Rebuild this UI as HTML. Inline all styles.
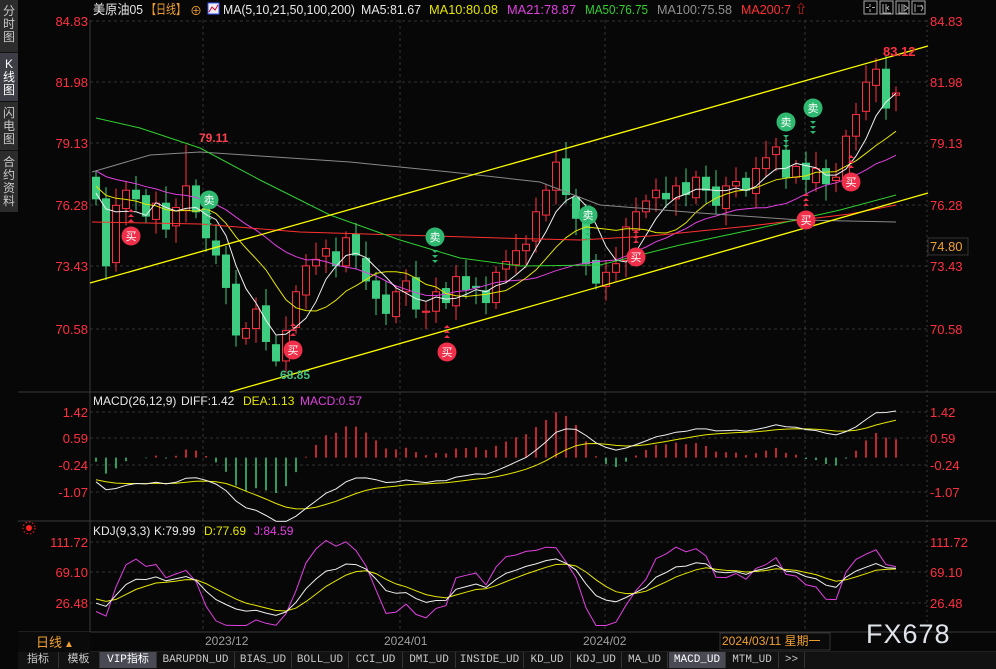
<!DOCTYPE html>
<html><head><meta charset="utf-8">
<style>
html,body{margin:0;padding:0;background:#070707;width:996px;height:669px;overflow:hidden;font-family:"Liberation Sans","Noto Sans CJK SC",sans-serif;}
#root{position:relative;width:996px;height:669px;}
svg{position:absolute;left:0;top:0;}
.side{position:absolute;left:0;top:0;width:18px;height:212px;background:#2c2c2c;color:#c8c8c8;font-size:12px;line-height:13px;text-align:center;}
.side div{padding:5px 0 3px;border-bottom:1px solid #111;}
.side .on{background:#3d3d45;color:#fff;}
.tabs{position:absolute;left:18px;top:652px;height:17px;width:978px;background:#121212;font-size:11px;color:#c8c8c8;}
.tabs span{position:absolute;top:0;height:16px;line-height:16px;text-align:center;border-right:1px solid #333;font-family:"Liberation Mono","Noto Sans CJK SC",monospace;}
.tabs .on{background:#4a4a55;color:#fff;}
</style></head><body><div id="root">
<div class="side"><div style="height:44px">分<br>时<br>图</div><div class="on" style="height:40px">K<br>线<br>图</div><div style="height:40px">闪<br>电<br>图</div><div style="height:52px;border:0">合<br>约<br>资<br>料</div></div>
<svg id="s" width="996" height="669" xmlns="http://www.w3.org/2000/svg" font-family="Liberation Sans, Noto Sans CJK SC, sans-serif">
<g font-size="13">
<text x="93" y="14" fill="#e8e8e8" textLength="50" lengthAdjust="spacingAndGlyphs">美原油05</text>
<text x="146" y="14" fill="#f0a030" textLength="40" lengthAdjust="spacingAndGlyphs">【日线】</text>
<text x="190" y="15" fill="#f0a030" font-size="12">⊕</text>
<rect x="208" y="3" width="11" height="11" fill="#eee" stroke="#3355ff"/><polyline points="209,12 212,7 215,10 218,5" fill="none" stroke="#c03" stroke-width="1"/>
<text x="223" y="14" fill="#e8e8e8" textLength="132" lengthAdjust="spacingAndGlyphs">MA(5,10,21,50,100,200)</text>
<text x="361" y="14" fill="#e8e8e8" textLength="60" lengthAdjust="spacingAndGlyphs">MA5:81.67</text>
<text x="429" y="14" fill="#e6e600" textLength="69" lengthAdjust="spacingAndGlyphs">MA10:80.08</text>
<text x="507" y="14" fill="#e040e0" textLength="69" lengthAdjust="spacingAndGlyphs">MA21:78.87</text>
<text x="585" y="14" fill="#30d030" textLength="63" lengthAdjust="spacingAndGlyphs">MA50:76.75</text>
<text x="657" y="14" fill="#909090" textLength="75" lengthAdjust="spacingAndGlyphs">MA100:75.58</text>
<text x="741" y="14" fill="#ff3030" textLength="50" lengthAdjust="spacingAndGlyphs">MA200:7</text>
<text x="795" y="13" fill="#ff2020" font-size="12" font-weight="bold">⇧</text>
</g>
<g fill="none" stroke="#aaa" stroke-width="1">
<rect x="864" y="1" width="13" height="13"/><rect x="880" y="1" width="13" height="13"/><rect x="896" y="1" width="13" height="13"/><rect x="912" y="1" width="13" height="13"/>
<path d="M870 4v3M870 9v3M866 7.5h3M872 7.5h3M883 4v9h8M886 4v8M889 6l-2 2 2 2M899 4v9h8M902 4v8M904 5l4 3-4 3zM915 4v8M917 6h6M921 5l2 3-2 3"/>
</g>
<g id="grid" stroke="#333" stroke-dasharray="3,3" stroke-width="1"></g>
<line x1="90" y1="20" x2="90" y2="632" stroke="#3a3a3a"/>
<line x1="927" y1="20" x2="927" y2="632" stroke="#3a3a3a" stroke-dasharray="2,3"/>
<line x1="18" y1="392" x2="996" y2="392" stroke="#3a3a3a"/>
<line x1="18" y1="521" x2="996" y2="521" stroke="#3a3a3a"/>
<line x1="18" y1="632" x2="996" y2="632" stroke="#3a3a3a"/>
<line x1="18" y1="652" x2="996" y2="652" stroke="#3a3a3a"/>
<g id="axis" font-size="13" fill="#ff3040"></g>
<g id="chart"></g>
<line x1="90" y1="283" x2="928" y2="46" stroke="#ffff00" stroke-width="1.3"/>
<line x1="230" y1="392" x2="928" y2="193" stroke="#ffff00" stroke-width="1.3"/>
<g id="sig" font-size="11" text-anchor="middle"></g>
<text x="199" y="142" fill="#ff4050" font-size="12" font-weight="bold">79.11</text>
<text x="280" y="379" fill="#40c080" font-size="12" font-weight="bold">68.85</text>
<text x="883" y="56" fill="#ff3040" font-size="13" font-weight="bold">83.12</text>
<rect x="928" y="238" width="40" height="17" fill="#0a0a0a" stroke="#333"/>
<text x="930" y="251" fill="#f0a030" font-size="13">74.80</text>
<g font-size="12">
<text x="93" y="405" fill="#e8e8e8">MACD(26,12,9)</text>
<text x="181" y="405" fill="#e8e8e8">DIFF:1.42</text>
<text x="243" y="405" fill="#e6e600">DEA:1.13</text>
<text x="300" y="405" fill="#e040e0">MACD:0.57</text>
<text x="93" y="535" fill="#e8e8e8">KDJ(9,3,3)</text>
<text x="154" y="535" fill="#e8e8e8">K:79.99</text>
<text x="204" y="535" fill="#e6e600">D:77.69</text>
<text x="254" y="535" fill="#e040e0">J:84.59</text>
</g>
<circle cx="29" cy="528" r="3" fill="#ff2020"/><circle cx="29" cy="528" r="6" fill="none" stroke="#ff2020" stroke-dasharray="1.5,2"/>
<rect x="18" y="632" width="72" height="20" fill="#0a0a0a"/>
<text x="36" y="647" fill="#f0a030" font-size="13">日线</text><text x="64" y="647" fill="#f0a030" font-size="10">▲</text>
<g font-size="12" fill="#a0a0a0"><text x="205" y="645">2023/12</text><text x="384" y="645">2024/01</text><text x="583" y="645">2024/02</text></g>
<rect x="720" y="633" width="110" height="17" fill="#0a0a0a" stroke="#333"/>
<text x="722" y="645" fill="#f0a030" font-size="12">2024/03/11 星期一</text>
<text x="866" y="643" fill="#e0e4ea" font-size="27" letter-spacing="1">FX678</text>
</svg>
<div class="tabs">
<span style="left:0;width:40px">指标</span><span style="left:40px;width:41px">模板</span><span class="on" style="left:82px;width:56px">VIP指标</span><span style="left:139px;width:77px">BARUPDN_UD</span><span style="left:217px;width:56px">BIAS_UD</span><span style="left:274px;width:56px">BOLL_UD</span><span style="left:331px;width:53px">CCI_UD</span><span style="left:385px;width:52px">DMI_UD</span><span style="left:438px;width:67px">INSIDE_UD</span><span style="left:506px;width:46px">KD_UD</span><span style="left:553px;width:50px">KDJ_UD</span><span style="left:604px;width:45px">MA_UD</span><span class="on" style="left:651px;width:56px">MACD_UD</span><span style="left:708px;width:52px">MTM_UD</span><span style="left:761px;width:25px">&gt;&gt;</span>
</div>
</div>
<script>
var NS="http://www.w3.org/2000/svg";
function el(p,t,a){var e=document.createElementNS(NS,t);for(var k in a)e.setAttribute(k,a[k]);p.appendChild(e);return e;}
var grid=document.getElementById('grid'),axis=document.getElementById('axis'),ch=document.getElementById('chart'),sig=document.getElementById('sig');
function py(p){return 21+(84.83-p)*21.61;}
var pl=[["84.83",21],["81.98",82],["79.13",143],["76.28",205],["73.43",266],["70.58",329]];
pl.forEach(function(a){el(grid,'line',{x1:90,y1:a[1],x2:927,y2:a[1]});var t=el(axis,'text',{x:88,y:a[1]+5,'text-anchor':'end'});t.textContent=a[0];var t2=el(axis,'text',{x:930,y:a[1]+5});t2.textContent=a[0];});
[["1.42",412],["0.59",438],["-0.24",465],["-1.07",492],["111.72",542],["69.10",572],["26.48",603]].forEach(function(a){el(grid,'line',{x1:90,y1:a[1],x2:927,y2:a[1]});var t=el(axis,'text',{x:88,y:a[1]+5,'text-anchor':'end'});t.textContent=a[0];var t2=el(axis,'text',{x:930,y:a[1]+5});t2.textContent=a[0];});
[203,400,605,805].forEach(function(x){el(grid,'line',{x1:x,y1:20,x2:x,y2:632});});
var c=[76.6,73.5,76.3,77,76.6,75.8,76.4,75.2,76.2,77.2,76.0,74.8,74.0,72.5,70.3,70.6,71.5,70.0,69.1,70.5,72.3,73.5,73.8,74.3,73.5,74.8,74.0,72.8,72.0,71.3,72.3,72.8,71.5,71.4,72.3,71.8,73.0,72.4,72.5,71.8,73.2,73.7,74.2,74.5,76.0,77.0,78.3,76.8,75.7,73.6,72.7,73.2,73.6,75.3,76.0,76.5,77.0,76.6,77.2,76.8,77.6,77.0,76.3,77.2,77.4,77.0,78.0,78.5,79.0,77.6,78.1,77.5,78.0,77.3,77.6,79.5,80.5,82.0,82.6,80.8,81.5];
var pre=[];for(var i=0;i<30;i++)pre.push(80.5-i*0.13);
var all=pre.concat(c);var N=c.length;
function X(i){return 96+i*10;}
var H=[],L=[];
for(var i=0;i<N;i++){var o=i?c[i-1]+((i%3)-1)*0.15:77.6;var cl=c[i];var hi=Math.max(o,cl)+0.3+((i*7)%5)*0.12,lo=Math.min(o,cl)-0.3-((i*3)%5)*0.12;
if(i==9)hi=79.11;if(i==18)lo=68.85;if(i==78)hi=83.12;if(i==80){o=81.4;}
H.push(hi);L.push(lo);
var up=cl>=o,col=up?'#ff3040':'#3dcc80';
el(ch,'line',{x1:X(i),y1:py(hi),x2:X(i),y2:py(lo),stroke:col});
var t=py(Math.max(o,cl)),b=py(Math.min(o,cl));if(b-t<1)b=t+1;
el(ch,'rect',{x:X(i)-3.5,y:t,width:7,height:b-t,fill:up?'#070707':col,stroke:col});}
function ma(n){var r=[];for(var i=0;i<N;i++){var s=0;for(var k=0;k<n;k++)s+=all[30+i-k];r.push(s/n);}return r;}
function line(v,f,col){var p=[];for(var i=0;i<N;i++)p.push(X(i)+','+f(v[i]).toFixed(1));el(ch,'polyline',{points:p.join(' '),fill:'none',stroke:col,'stroke-width':1});}
line(ma(21),py,'#e040e0');line(ma(10),py,'#e6e600');line(ma(5),py,'#f0f0f0');
el(ch,'polyline',{points:'92,172 150,155 200,152 260,156 350,162 450,172 540,182 600,205 700,213 800,220 896,222',fill:'none',stroke:'#888'});
el(ch,'polyline',{points:'92,222 200,224 300,232 400,235 500,238 580,240 650,236 750,226 850,214 896,205',fill:'none',stroke:'#ff3030'});
el(ch,'polyline',{points:'96,118 140,128 200,148 260,180 330,215 400,240 460,258 520,266 600,265 680,245 760,228 840,210 896,195',fill:'none',stroke:'#30d030'});
function ema(a,n){var k=2/(n+1),r=[a[0]];for(var i=1;i<a.length;i++)r.push(a[i]*k+r[i-1]*(1-k));return r;}
var e12=ema(all,12),e26=ema(all,26),dif=[];for(var i=0;i<all.length;i++)dif.push(e12[i]-e26[i]);var dea=ema(dif,9);
function my(v){return 457.6-v*32.1;}
var dp=[],ep=[];
for(var i=0;i<N;i++){var d=dif[30+i],e=dea[30+i],h=(d-e)*2;
el(ch,'line',{x1:X(i),y1:my(0),x2:X(i),y2:my(h),stroke:h>=0?'#ff3040':'#3dcc80','stroke-width':1.5});
dp.push(X(i)+','+my(d).toFixed(1));ep.push(X(i)+','+my(e).toFixed(1));}
el(ch,'polyline',{points:ep.join(' '),fill:'none',stroke:'#e6e600'});
el(ch,'polyline',{points:dp.join(' '),fill:'none',stroke:'#f0f0f0'});
function ky(v){return 542+(111.72-v)*0.7157;}
var K=30,D=35,kp=[],dp2=[],jp=[];
for(var i=0;i<N;i++){var hh=-1e9,ll=1e9;for(var k=Math.max(0,i-8);k<=i;k++){hh=Math.max(hh,H[k]);ll=Math.min(ll,L[k]);}
var rsv=(c[i]-ll)/(hh-ll)*100;K=(2*K+rsv)/3;D=(2*D+K)/3;var J=3*K-2*D;
kp.push(X(i)+','+ky(K).toFixed(1));dp2.push(X(i)+','+ky(D).toFixed(1));jp.push(X(i)+','+ky(Math.max(-5,Math.min(120,J))).toFixed(1));}
el(ch,'polyline',{points:jp.join(' '),fill:'none',stroke:'#e040e0'});
el(ch,'polyline',{points:dp2.join(' '),fill:'none',stroke:'#e6e600'});
el(ch,'polyline',{points:kp.join(' '),fill:'none',stroke:'#f0f0f0'});
function s(x,y,buy){el(sig,'circle',{cx:x,cy:y,r:9.5,fill:buy?'#f0304a':'#2fb870'});var t=el(sig,'text',{x:x,y:y+4,fill:'#fff'});t.textContent=buy?'买':'卖';
for(var k=0;k<3;k++){var yy=buy?y-14-k*5:y+13+k*5;el(sig,'path',{d:buy?('M'+(x-3)+' '+yy+'l3 -3l3 3z'):('M'+(x-3)+' '+yy+'l3 3l3 -3z'),fill:buy?'#f0304a':'#2fb870'});}}
[[131,236,1],[293,350,1],[447,352,1],[636,257,1],[806,220,1],[851,182,1],[209,200,0],[435,237,0],[588,215,0],[786,122,0],[813,108,0]].forEach(function(a){s(a[0],a[1],a[2]);});
</script>
</body></html>
